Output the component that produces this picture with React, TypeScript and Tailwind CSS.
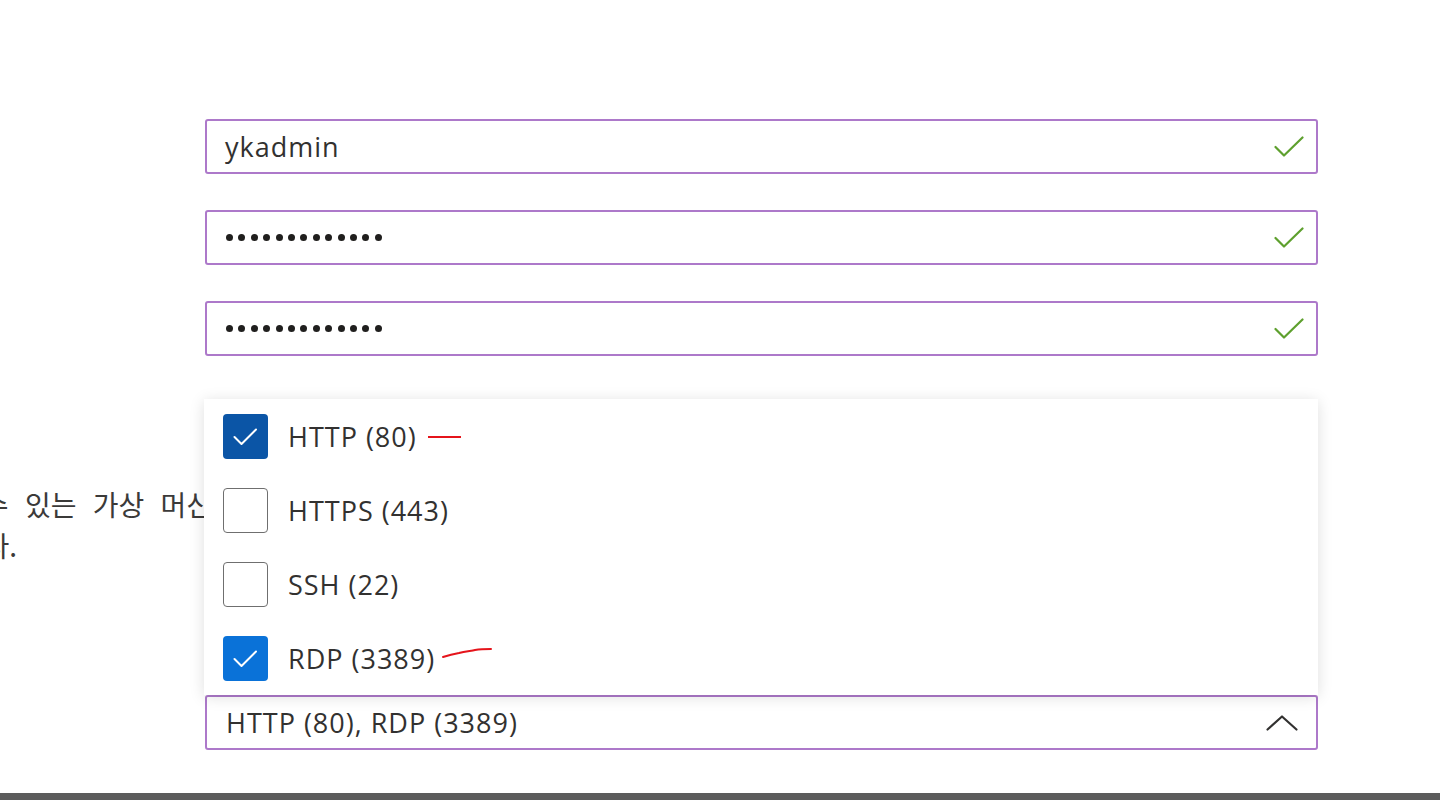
import React from 'react';

// ============================================================================
// ICONS
// ============================================================================

function ValidCheck() {
  return (
    <svg width="30" height="22" viewBox="0 0 30 22" fill="none" className="shrink-0">
      <path d="M1.5 11 L10 19.5 L28.5 1.5" stroke="#5ea02e" strokeWidth="2.2" strokeLinecap="round" strokeLinejoin="round" />
    </svg>
  );
}

function BoxCheck() {
  return (
    <svg width="45" height="45" viewBox="0 0 45 45" fill="none">
      <path d="M11.5 23 L18.5 30 L33 15.5" stroke="#ffffff" strokeWidth="2" strokeLinecap="round" strokeLinejoin="round" />
    </svg>
  );
}

function ChevronUp() {
  return (
    <svg width="32" height="16" viewBox="0 0 32 16" fill="none">
      <path d="M1.5 14.5 L16 1.5 L30.5 14.5" stroke="#323130" strokeWidth="2.2" strokeLinecap="round" strokeLinejoin="round" />
    </svg>
  );
}

// ============================================================================
// PIECES
// ============================================================================

function TextField({ value }: { value: string }) {
  return (
    <div className="h-[55px] flex items-center justify-between pl-[18px] pr-[12px] border-2 border-solid border-[#ad79ca] rounded-[3px] bg-white">
      <span className="text-[27px] tracking-[1px] text-[#323130] leading-none">{value}</span>
      <ValidCheck />
    </div>
  );
}

function PasswordField() {
  return (
    <div className="h-[55px] flex items-center justify-between pl-[19px] pr-[12px] border-2 border-solid border-[#ad79ca] rounded-[3px] bg-white">
      <div className="flex items-center gap-[5.4px]">
        {Array.from({ length: 13 }).map((_, i) => (
          <span key={i} className="w-[7px] h-[7px] rounded-full bg-[#201f1e]" />
        ))}
      </div>
      <ValidCheck />
    </div>
  );
}

type Port = { label: string; checked: boolean; tone?: 'dark' | 'light' };

const PORTS: Port[] = [
  { label: 'HTTP (80)', checked: true, tone: 'dark' },
  { label: 'HTTPS (443)', checked: false },
  { label: 'SSH (22)', checked: false },
  { label: 'RDP (3389)', checked: true, tone: 'light' },
];

function PortOption({ port, mark }: { port: Port; mark?: React.ReactNode }) {
  return (
    <div className="h-[74px] flex items-center gap-[20px]">
      {port.checked ? (
        <div
          className={
            port.tone === 'dark'
              ? 'w-[45px] h-[45px] rounded-[4px] bg-[#0b55a6] flex items-center justify-center'
              : 'w-[45px] h-[45px] rounded-[4px] bg-[#0a72d8] flex items-center justify-center'
          }
        >
          <BoxCheck />
        </div>
      ) : (
        <div className="w-[45px] h-[45px] rounded-[4px] border-[1.5px] border-solid border-[#6f6f6f] bg-white" />
      )}
      <span className="text-[27px] tracking-[1px] text-[#323130] leading-none">{port.label}</span>
      {mark}
    </div>
  );
}

// ============================================================================
// APP
// ============================================================================

export default function App() {
  return (
    <div
      className="w-[1440px] h-[800px] bg-white flex flex-col overflow-hidden"
      style={{ fontFamily: '"Open Sans", "Noto Sans CJK KR", sans-serif' }}
    >
      <div className="flex-1 grid grid-cols-[205px_1113px] content-start pt-[119px]">
        {/* credentials */}
        <div />
        <TextField value="ykadmin" />
        <div className="h-[36px] col-span-2" />
        <div />
        <PasswordField />
        <div className="h-[36px] col-span-2" />
        <div />
        <PasswordField />

        {/* description row */}
        <div
          className="h-[339px] pt-[128px] flex flex-col text-[28px] leading-[41px] text-[#3b3a39] [word-spacing:10px]"
          style={{ fontFamily: '"Noto Sans CJK KR", sans-serif' }}
        >
          <div className="flex justify-end mr-[-7px] whitespace-nowrap">액세스할 수 있는 가상 머신</div>
          <div className="flex justify-end mr-[188px] whitespace-nowrap">포트를 선택합니다.</div>
        </div>
        <div />

        {/* inbound ports select */}
        <div />
        <div className="relative">
          <div className="absolute bottom-full left-[-1px] right-0 bg-white pl-[19px] shadow-[0_2px_14px_rgba(0,0,0,0.13)] flex flex-col">
            {PORTS.map((p, i) => (
              <PortOption
                key={p.label}
                port={p}
                mark={
                  i === 0 ? (
                    <svg width="40" height="6" viewBox="0 0 40 6" className="-ml-[11px] mt-[2px]">
                      <path d="M2 3 L35 3" stroke="#e5141b" strokeWidth="2" />
                    </svg>
                  ) : i === 3 ? (
                    <svg width="54" height="20" viewBox="0 0 54 20" className="-ml-[14px] -mt-[12px]">
                      <path d="M2 15 C8 13 12 12 18 11 C24 9 30 9 34 8 C40 7 45 7 50 7" stroke="#e5141b" strokeWidth="2" fill="none" strokeLinecap="round" />
                    </svg>
                  ) : null
                }
              />
            ))}
          </div>
          <div className="h-[55px] flex items-center justify-between pl-[19px] pr-[18px] border-2 border-solid border-[#ad79ca] rounded-[3px] bg-white">
            <span className="text-[27px] tracking-[1px] text-[#323130] leading-none">HTTP (80), RDP (3389)</span>
            <ChevronUp />
          </div>
        </div>
      </div>
      <div className="h-[7px] bg-[#5c5c5c]" />
    </div>
  );
}
